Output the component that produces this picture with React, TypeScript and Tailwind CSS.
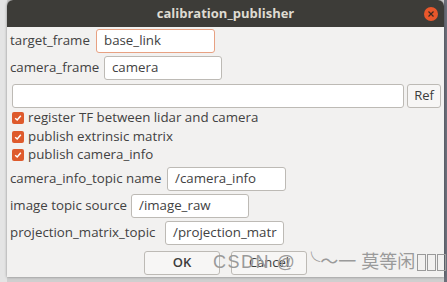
export default function App() {
  const font = { fontFamily: '"Open Sans", "Noto Sans", sans-serif' }
  return (
    <div className="relative h-[282px] w-[447px] overflow-hidden bg-[#cfcfcf]" style={font}>
      {/* background window bits */}
      <div className="absolute left-0 top-0 h-[282px] w-[7px] bg-[#e4e4e4]" />
      <div className="absolute right-0 top-0 h-[282px] w-[3px] bg-[#6b6f7a]" />

      {/* dialog */}
      <div className="absolute left-[7px] top-0 flex h-[277px] w-[437px] flex-col overflow-hidden rounded-t-[6px] bg-[#f2f1f0] shadow-[0_0_3px_rgba(0,0,0,0.4)]">
        <div className="relative flex h-[27px] items-center justify-center bg-[#3d3c38] text-[13px] font-bold text-[#dfdbd2]">
          calibration_publisher
          <div className="absolute right-[6px] top-[7px] flex h-[14px] w-[14px] items-center justify-center rounded-full bg-[#e9572b]">
            <svg width="6" height="6" viewBox="0 0 6 6">
              <path d="M0.5 0.5 L5.5 5.5 M5.5 0.5 L0.5 5.5" stroke="#3d2a20" strokeWidth="1.2" />
            </svg>
          </div>
        </div>

        <div className="flex flex-col px-[3px] text-[13.3px] text-[#424242]">
          <Row label="target_frame" labelW="w-[83px]" value="base_link" width="w-[119px]" focused className="mt-[2px]" />
          <Row label="camera_frame" labelW="w-[91px]" value="camera" width="w-[118px]" className="mt-[3px]" />

          <div className="mt-[4px] flex h-[24px] items-center gap-[3px] pl-[2px]">
            <div className="h-[24px] w-[394px] rounded-[3px] border border-[#bdbab5] bg-white" />
            <button className="h-[24px] w-[34px] rounded-[3px] border border-[#bdbab5] bg-[#f7f6f5] text-[13px] text-[#3c3c3c]">
              Ref
            </button>
          </div>

          <div className="mt-[1px] flex flex-col pl-[2px]">
            <Check label="register TF between lidar and camera" />
            <Check label="publish extrinsic matrix" />
            <Check label="publish camera_info" />
          </div>

          <Row label="camera_info_topic name" labelW="w-[154px]" value="/camera_info" width="w-[119px]" className="mt-[2px]" />
          <Row label="image topic source" labelW="w-[118px]" value="/image_raw" width="w-[118px]" className="mt-[3px]" />
          <Row label="projection_matrix_topic" labelW="w-[152px]" value="/projection_matr" width="w-[119px]" className="mt-[3px]" />

          <div className="mt-[6px] flex h-[24px] gap-[11px] pl-[134px]">
            <button className="h-[24px] w-[76px] rounded-[3px] border border-[#bdbab5] bg-[#f7f6f5] text-[13px] font-semibold text-[#3c3c3c]">
              OK
            </button>
            <button className="h-[24px] w-[76px] rounded-[3px] border border-[#bdbab5] bg-[#f7f6f5] text-[13px] text-[#3c3c3c]">
              Cancel
            </button>
          </div>
        </div>
      </div>

      {/* watermark */}
      <div
        className="absolute left-[213px] top-[250px] flex w-max items-center whitespace-nowrap text-[18px] leading-[24px] text-[#9a9a9a]"
        style={{ fontFamily: '"Liberation Sans", "Noto Sans CJK SC", sans-serif' }}
      >
        <span className="tracking-[1.5px]">CSDN @</span>
        <span className="ml-[6px]">╰～一 莫等闲</span>
        <span className="ml-[2px] inline-block h-[17px] w-[9px] border border-[#9a9a9a]" />
        <span className="ml-[1px] inline-block h-[17px] w-[9px] border border-[#9a9a9a]" />
        <span className="ml-[1px] inline-block h-[17px] w-[9px] border border-[#9a9a9a]" />
      </div>
    </div>
  )
}

function Row({
  label,
  labelW,
  value,
  width,
  focused,
  className,
}: {
  label: string
  labelW: string
  value: string
  width: string
  focused?: boolean
  className?: string
}) {
  return (
    <div className={`flex h-[24px] items-center gap-[3px] ${className ?? ''}`}>
      <span className={`${labelW} whitespace-nowrap`}>{label}</span>
      <div
        className={`flex h-[24px] ${width} items-center overflow-hidden whitespace-nowrap rounded-[3px] border bg-white pl-[7px] ${
          focused ? 'border-[#e8a182]' : 'border-[#bdbab5]'
        }`}
      >
        {value}
      </div>
    </div>
  )
}

function Check({ label }: { label: string }) {
  return (
    <div className="flex h-[18.5px] items-center gap-[4px]">
      <div className="flex h-[12px] w-[12px] items-center justify-center rounded-[2px] bg-[#de5a2c]">
        <svg width="8" height="8" viewBox="0 0 8 8">
          <path d="M1.2 4.2 L3.2 6 L6.8 1.8" stroke="white" strokeWidth="1.5" fill="none" />
        </svg>
      </div>
      <span>{label}</span>
    </div>
  )
}
